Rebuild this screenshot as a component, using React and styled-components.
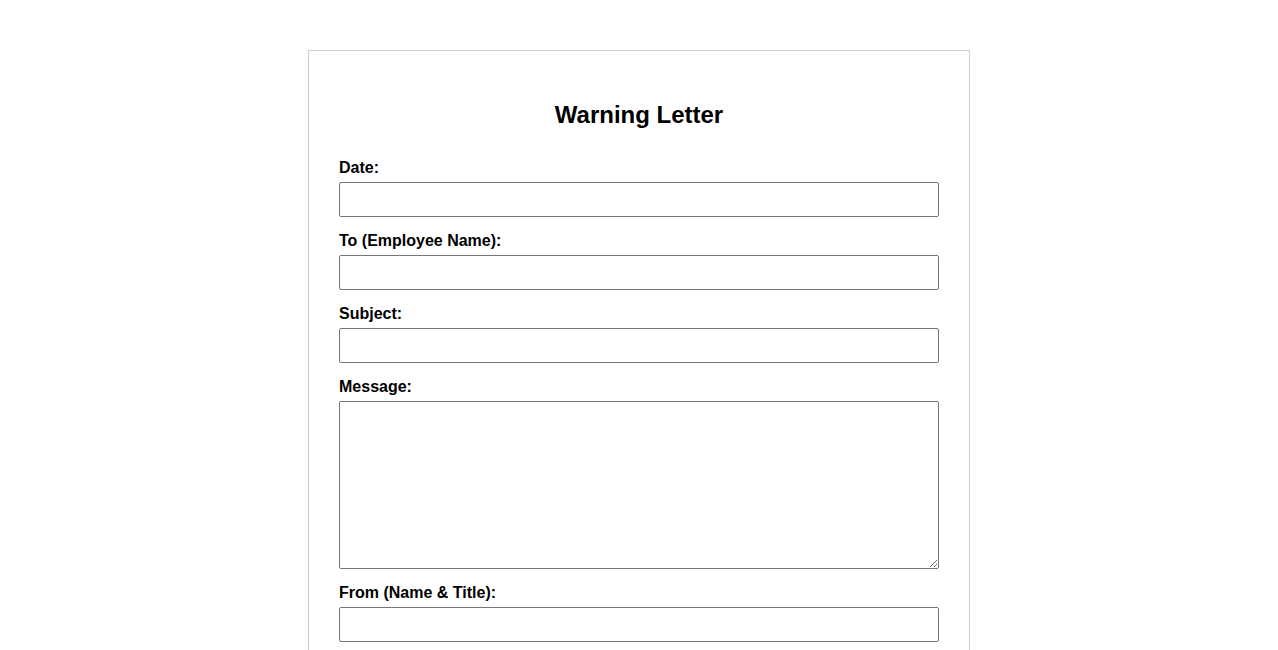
import React from "react";
import styled, { createGlobalStyle } from "styled-components";

const Global = createGlobalStyle`
  body {
    margin: 0;
    background: #fff;
    font-family: "Liberation Sans", Arial, sans-serif;
    color: #000;
  }
`;

const Page = styled.div`
  max-width: 600px;
  margin: 50px auto;
  padding: 30px;
  border: 1px solid #ccc;
  background: #fff;
`;

const Title = styled.h2`
  text-align: center;
  font-size: 24px;
  font-weight: bold;
  margin: 20px 0 30px;
`;

const Group = styled.div`
  margin-bottom: 15px;
`;

const Label = styled.label`
  display: block;
  font-size: 16px;
  font-weight: bold;
  margin-bottom: 5px;
`;

const Input = styled.input`
  display: block;
  width: 100%;
  height: 35px;
  box-sizing: border-box;
  padding: 8px;
  font-size: 14px;
  font-family: "Liberation Sans", Arial, sans-serif;
  border: 1px solid #767676;
  border-radius: 2px;
  margin: 0;
`;

const TextArea = styled.textarea`
  display: block;
  width: 100%;
  box-sizing: border-box;
  height: 168px;
  padding: 8px;
  font-size: 14px;
  font-family: "Liberation Sans", Arial, sans-serif;
  border: 1px solid #767676;
  border-radius: 2px;
  margin: 0;
`;

const fields = [
  { id: "date", label: "Date:" },
  { id: "to", label: "To (Employee Name):" },
  { id: "subject", label: "Subject:" },
];

export default function App() {
  return (
    <>
      <Global />
      <Page>
        <Title>Warning Letter</Title>
        {fields.map((f) => (
          <Group key={f.id}>
            <Label htmlFor={f.id}>{f.label}</Label>
            <Input id={f.id} type="text" />
          </Group>
        ))}
        <Group>
          <Label htmlFor="message">Message:</Label>
          <TextArea id="message" />
        </Group>
        <Group>
          <Label htmlFor="from">From (Name &amp; Title):</Label>
          <Input id="from" type="text" />
        </Group>
      </Page>
    </>
  );
}
